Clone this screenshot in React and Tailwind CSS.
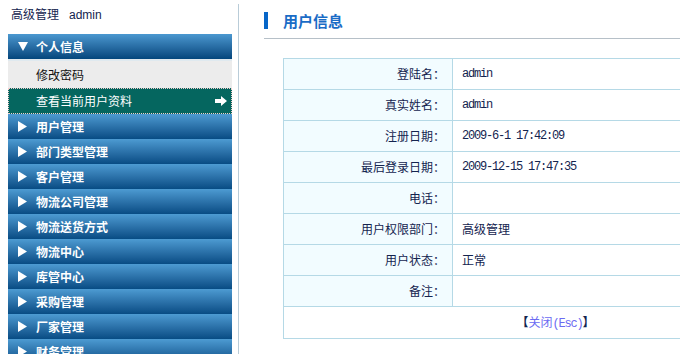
import React from "react";

const menu = [
  "用户管理",
  "部门类型管理",
  "客户管理",
  "物流公司管理",
  "物流送货方式",
  "物流中心",
  "库管中心",
  "采购管理",
  "厂家管理",
  "财务管理",
];

const rows = [
  ["登陆名：", "admin", true],
  ["真实姓名：", "admin", true],
  ["注册日期：", "2009-6-1 17:42:09", true],
  ["最后登录日期：", "2009-12-15 17:47:35", true],
  ["电话：", "", false],
  ["用户权限部门：", "高级管理", false],
  ["用户状态：", "正常", false],
  ["备注：", "", false],
];

const cjk = "font-['Noto_Sans_CJK_SC',sans-serif]";
const mono = "font-['Liberation_Mono','Noto_Sans_CJK_SC',monospace] text-[12px] tracking-[-1.2px]";

function Play() {
  return (
    <svg width="9" height="11" viewBox="0 0 9 11" className="shrink-0">
      <polygon points="0,0 9,5.5 0,11" fill="#fff" />
    </svg>
  );
}

function Down() {
  return (
    <svg width="10" height="9" viewBox="0 0 10 9" className="shrink-0">
      <polygon points="0,0 10,0 5,9" fill="#fff" />
    </svg>
  );
}

function Arrow() {
  return (
    <svg width="12" height="10" viewBox="0 0 12 10">
      <path d="M0 3h6V0l6 5-6 5V7H0z" fill="#fff" />
    </svg>
  );
}

export default function App() {
  return (
    <div className={`flex w-[680px] h-[354px] overflow-hidden bg-white text-[12px] text-[#14244f] ${cjk}`}>
      {/* left menu */}
      <aside className="w-[224px] ml-2 shrink-0">
        <div className="h-[34px] pt-[6px] pl-[3px] leading-[16px] flex items-baseline gap-[10px]">
          <span>高级管理</span>
          <span className="font-['Liberation_Sans',sans-serif] text-[12px]">admin</span>
        </div>

        <div className="h-[25px] flex items-center pl-[10px] bg-gradient-to-b from-[#4b98d0] to-[#03467c] text-white font-bold">
          <Down />
          <span className="ml-[8px]">个人信息</span>
        </div>
        <div className="h-[2px] bg-[#dfe9ef]" />
        <div className="h-[27px] flex items-center pl-[28px] bg-[#ececec] text-[#111]">修改密码</div>
        <div className="h-[26px] flex items-center justify-between pl-[27px] pr-[4px] bg-[#05665f] border border-dotted border-[#f3cccc] text-white">
          <span>查看当前用户资料</span>
          <Arrow />
        </div>

        {menu.map((m) => (
          <div
            key={m}
            className="h-[25px] flex items-center pl-[10px] bg-gradient-to-b from-[#4d9bd2] to-[#074c84] text-white font-bold"
          >
            <Play />
            <span className="ml-[9px]">{m}</span>
          </div>
        ))}
      </aside>

      <div className="ml-[6px] mt-1 w-px shrink-0 bg-[#b9ccd8]" />

      {/* content */}
      <main className="flex-1 pl-[25px] pt-[12px] min-w-0">
        <div className="flex items-center h-[17px]">
          <div className="w-[4px] h-[17px] bg-[#0766c8]" />
          <h1 className="ml-[15px] text-[15px] leading-[17px] font-bold text-[#1a6cc6]">用户信息</h1>
        </div>
        <div className="mt-[9px] h-px bg-[#b6c0c8]" />

        <table className="mt-[19px] ml-[19px] w-[545px] border-collapse">
          <tbody>
            {rows.map(([label, value, isMono]) => (
              <tr key={label}>
                <td className="w-[169px] h-[31px] p-0 pr-[7px] text-right bg-[#f2fcff] border border-[#b5d9e6]">{label}</td>
                <td className={`h-[31px] p-0 pl-[9px] border border-[#b5d9e6] ${isMono ? mono : ""}`}>{value}</td>
              </tr>
            ))}
            <tr>
              <td colSpan={2} className="h-[32px] p-0 text-center border border-[#b5d9e6]">
                <span className="font-bold">【</span>
                <span className="text-[#6b6bf2]">关闭<span className={mono}>(Esc)</span></span>
                <span className="font-bold">】</span>
              </td>
            </tr>
          </tbody>
        </table>
      </main>
    </div>
  );
}
